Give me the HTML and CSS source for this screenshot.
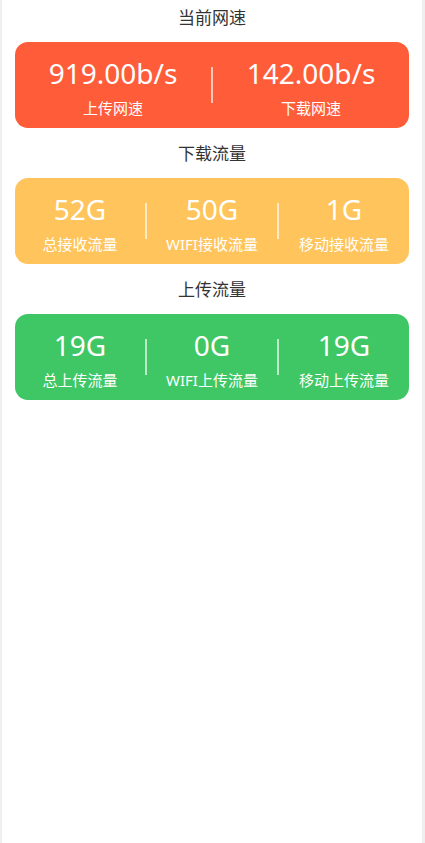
FILE: index.html
```html
<!DOCTYPE html>
<html lang="zh-CN">
<head>
<meta charset="utf-8">
<meta name="viewport" content="width=device-width, initial-scale=1">
<title>流量统计</title>
<link rel="stylesheet" href="styles.css">
</head>
<body>
<div class="page">
  <section class="section">
    <h2 class="section-title">当前网速</h2>
    <div class="card card-red">
      <div class="item">
        <div class="value">919.00b/s</div>
        <div class="label">上传网速</div>
      </div>
      <div class="divider"></div>
      <div class="item">
        <div class="value">142.00b/s</div>
        <div class="label">下载网速</div>
      </div>
    </div>
  </section>
  <section class="section">
    <h2 class="section-title">下载流量</h2>
    <div class="card card-yellow">
      <div class="item">
        <div class="value">52G</div>
        <div class="label">总接收流量</div>
      </div>
      <div class="divider"></div>
      <div class="item">
        <div class="value">50G</div>
        <div class="label">WIFI接收流量</div>
      </div>
      <div class="divider"></div>
      <div class="item">
        <div class="value">1G</div>
        <div class="label">移动接收流量</div>
      </div>
    </div>
  </section>
  <section class="section">
    <h2 class="section-title">上传流量</h2>
    <div class="card card-green">
      <div class="item">
        <div class="value">19G</div>
        <div class="label">总上传流量</div>
      </div>
      <div class="divider"></div>
      <div class="item">
        <div class="value">0G</div>
        <div class="label">WIFI上传流量</div>
      </div>
      <div class="divider"></div>
      <div class="item">
        <div class="value">19G</div>
        <div class="label">移动上传流量</div>
      </div>
    </div>
  </section>
</div>
</body>
</html>
```

FILE: styles.css
```css
html, body {
  margin: 0;
  padding: 0;
  background: #efefef;
}

body {
  font-family: "Noto Sans", "Noto Sans CJK SC", sans-serif;
}

.page {
  margin: 0 3px 0 2px;
  min-height: 843px;
  background: #ffffff;
  padding: 6px 13px 0;
  box-sizing: border-box;
}

.section {
  margin-bottom: 14px;
}

.section-title {
  margin: 0 0 12px;
  font-size: 17px;
  font-weight: 400;
  line-height: 24px;
  text-align: center;
  color: #333333;
}

.card {
  display: flex;
  align-items: flex-start;
  height: 86px;
  box-sizing: border-box;
  padding-top: 16px;
  border-radius: 13px;
  color: #ffffff;
}

.card-red { background: #ff5c3a; }
.card-yellow { background: #ffc45b; }
.card-green { background: #3ec764; }

.item {
  flex: 1;
  display: flex;
  flex-direction: column;
  align-items: center;
}

.value {
  font-size: 28px;
  line-height: 30px;
}

.label {
  margin-top: 10px;
  font-size: 15px;
  line-height: 20px;
}

.divider {
  align-self: center;
  margin-top: -16px;
  width: 2px;
  height: 36px;
  background: rgba(255, 255, 255, 0.65);
}
```
